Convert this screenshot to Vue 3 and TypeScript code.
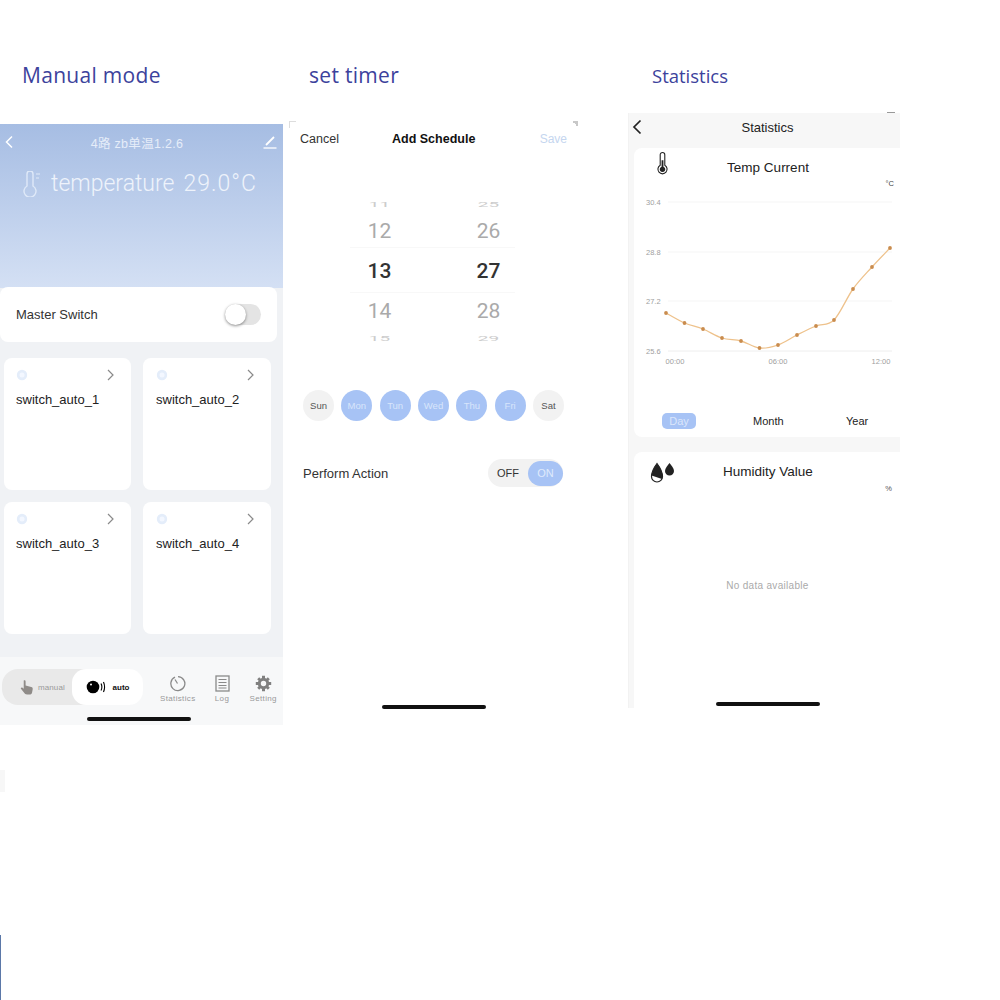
<script setup lang="ts">
// 三个并排的手机截图
const cards = ['switch_auto_1', 'switch_auto_2', 'switch_auto_3', 'switch_auto_4'];
const weekDays = [
  { label: 'Sun', on: false },
  { label: 'Mon', on: true },
  { label: 'Tun', on: true },
  { label: 'Wed', on: true },
  { label: 'Thu', on: true },
  { label: 'Fri', on: true },
  { label: 'Sat', on: false }
];
const hours = ['11', '12', '13', '14', '15'];
const minutes = ['25', '26', '27', '28', '29'];

// 折线图数据点 (viewBox 坐标)
const points: [number, number][] = [
  [32, 139], [50.5, 149], [69, 155], [88, 164], [107, 167], [125.5, 174], [144, 171],
  [163, 161], [182, 152], [200, 146], [219, 115], [238, 93], [256, 74]
];

// 平滑曲线
function smooth(pts: [number, number][]): string {
  let d = `M${pts[0][0]} ${pts[0][1]}`;
  for (let i = 0; i < pts.length - 1; i++) {
    const a = pts[Math.max(i - 1, 0)];
    const b = pts[i];
    const c = pts[i + 1];
    const e = pts[Math.min(i + 2, pts.length - 1)];
    const c1x = b[0] + (c[0] - a[0]) / 6;
    const c1y = b[1] + (c[1] - a[1]) / 6;
    const c2x = c[0] - (e[0] - b[0]) / 6;
    const c2y = c[1] - (e[1] - b[1]) / 6;
    d += ` C${c1x} ${c1y} ${c2x} ${c2y} ${c[0]} ${c[1]}`;
  }
  return d;
}
const line = smooth(points);
</script>

<template>
  <div class="page">
    <section class="col col-manual">
      <h1 class="caption">Manual mode</h1>
      <div class="phone manual">
        <div class="hero">
          <div class="hero-nav">
            <svg class="hero-icon" width="10" height="14" viewBox="0 0 10 14"><path d="M8 1.5 2.500 7 8 12.500" fill="none" stroke="#fff" stroke-width="1.500" /></svg>
            <span class="hero-title">4路 zb单温1.2.6</span>
            <svg class="hero-icon" width="14" height="14" viewBox="0 0 14 14"><path d="M3 10 11 2" fill="none" stroke="#fff" stroke-width="1.800" /><path d="M0.500 13H13.500" fill="none" stroke="#fff" stroke-width="1.300" /></svg>
          </div>
          <div class="hero-temp">
            <svg width="20" height="26" viewBox="0 0 20 26"><path d="M5 3a3 3 0 0 1 6 0v12a6 6 0 1 1-6 0Z" fill="none" stroke="#dfe9f8" stroke-width="1.400" /><path d="M14 3h4M14 7h3" stroke="#dfe9f8" stroke-width="1.200" /></svg>
            <span>temperature</span>
            <span class="hero-value">29.0°C</span>
          </div>
        </div>
        <div class="master">
          <span>Master Switch</span>
          <span class="toggle"><span class="knob"></span></span>
        </div>
        <div class="cards">
          <div v-for="name in cards" :key="name" class="card">
            <div class="card-top">
              <svg width="12" height="12" viewBox="0 0 12 12"><circle cx="6" cy="6" r="5.200" fill="#e4edfa" /><circle cx="6" cy="6" r="2.500" fill="#f3f7ff" /></svg>
              <svg width="9" height="12" viewBox="0 0 9 12"><path d="M2 1 7 6 2 11" fill="none" stroke="#8a8a8a" stroke-width="1.200" /></svg>
            </div>
            <div class="card-name">{{ name }}</div>
          </div>
        </div>
        <div class="tabbar">
          <div class="segment">
            <div class="seg-item seg-manual">
              <svg width="14" height="16" viewBox="0 0 15 17"><path d="M4 1.500c1-.8 2 0 2 1V7l6 1.500c1.400.4 1.800 1.200 1.600 2.400L13 14c-.2 1.400-1.200 2.500-3 2.500H7.500C6 16.500 5 15.800 4.200 14.500L1 10.500c-.6-.9.600-2 1.700-1.200L4 10.300Z" fill="#8f8b88" /></svg>
              <span>manual</span>
            </div>
            <div class="seg-item seg-active">
              <svg width="20" height="14" viewBox="0 0 20 14"><circle cx="7" cy="7" r="6.300" fill="#000" /><circle cx="5" cy="4.500" r="1" fill="#fff" /><path d="M15 3.500c1 2 1 5 0 7M17.500 2c1.300 3 1.300 7 0 10" fill="none" stroke="#000" stroke-width="1.100" /></svg>
              <span>auto</span>
            </div>
          </div>
          <div class="tab">
            <svg width="17" height="17" viewBox="0 0 17 17"><path d="M6 2.200A7 7 0 1 0 9 1.600" fill="none" stroke="#8a8a8a" stroke-width="1.300" /><path d="M8.500 8.500 6 4.500" stroke="#8a8a8a" stroke-width="1.300" /></svg>
            <span>Statistics</span>
          </div>
          <div class="tab">
            <svg width="15" height="17" viewBox="0 0 15 17"><rect x="1" y="1" width="13" height="15" fill="none" stroke="#8a8a8a" stroke-width="1.300" /><path d="M3.500 4.500h8M3.500 7.500h8M3.500 10.500h8M3.500 13h8" stroke="#8a8a8a" stroke-width="1" /></svg>
            <span>Log</span>
          </div>
          <div class="tab">
            <svg width="17" height="17" viewBox="0 0 17 17"><circle cx="8.500" cy="8.500" r="4.200" fill="none" stroke="#808080" stroke-width="3" /><path d="M7 .8h3v3H7ZM7 13.200h3v3H7ZM.8 7h3v3h-3ZM13.200 7h3v3h-3ZM2.200 4.300l2-2 2 2-2 2ZM10.800 12.700l2-2 2 2-2 2ZM10.800 4.300l2-2 2 2-2 2ZM2.200 12.700l2-2 2 2-2 2Z" fill="#808080" /></svg>
            <span>Setting</span>
          </div>
        </div>
        <div class="home home-manual"></div>
      </div>
    </section>

    <section class="col col-timer">
      <h1 class="caption">set timer</h1>
      <div class="phone timer">
        <div class="timer-nav">
          <span class="cancel">Cancel</span>
          <span class="timer-title">Add Schedule</span>
          <span class="save">Save</span>
        </div>
        <div class="picker">
          <div class="band"></div>
          <div class="wheel">
            <span v-for="(h, i) in hours" :key="h" :class="['num', 'num-' + i]"><span>{{ h }}</span></span>
          </div>
          <div class="wheel">
            <span v-for="(m, i) in minutes" :key="m" :class="['num', 'num-' + i]"><span>{{ m }}</span></span>
          </div>
        </div>
        <div class="days">
          <span v-for="d in weekDays" :key="d.label" :class="['day', { 'day-on': d.on }]">{{ d.label }}</span>
        </div>
        <div class="action">
          <span>Perform Action</span>
          <div class="onoff">
            <span class="off">OFF</span>
            <span class="on">ON</span>
          </div>
        </div>
        <div class="home home-timer"></div>
      </div>
    </section>

    <section class="col col-stats">
      <h1 class="caption caption-stats">Statistics</h1>
      <div class="phone stats">
        <div class="stats-nav">
          <svg class="back" width="10" height="16" viewBox="0 0 10 16"><path d="M8.500 1.500 2 8l6.500 6.500" fill="none" stroke="#222" stroke-width="1.700" /></svg>
          <span>Statistics</span>
        </div>
        <div class="panel panel-temp">
          <div class="panel-head">
            <svg class="panel-icon" width="11" height="24" viewBox="0 0 12 24"><path d="M3.500 3a2.500 2.500 0 0 1 5 0v11.500a5 5 0 1 1-5 0Z" fill="#fff" stroke="#222" stroke-width="1.200" /><path d="M5 9h2v7a3 3 0 1 1-2 0Z" fill="#222" /></svg>
            <span>Temp Current</span>
          </div>
          <svg class="chart" width="266" height="222" viewBox="0 0 266 222">
            <text x="260" y="12" text-anchor="end" class="unit">°C</text>
            <g class="ticks">
              <text x="12" y="30.500">30.4</text>
              <text x="12" y="80.500">28.8</text>
              <text x="12" y="129.500">27.2</text>
              <text x="12" y="179.500">25.6</text>
              <text x="41" y="190" text-anchor="middle">00:00</text>
              <text x="144" y="190" text-anchor="middle">06:00</text>
              <text x="247" y="190" text-anchor="middle">12:00</text>
            </g>
            <path d="M34 28H258M34 78H258M34 127H258" stroke="#f5f5f5" fill="none" />
            <path d="M34 177H258" stroke="#eeeeee" fill="none" />
            <path :d="line" fill="none" stroke="#eec28c" stroke-width="1.300" />
            <circle v-for="(p, i) in points" :key="i" :cx="p[0]" :cy="p[1]" r="1.900" fill="#c98c4e" />
          </svg>
          <div class="ranges">
            <span class="range range-on">Day</span>
            <span class="range">Month</span>
            <span class="range">Year</span>
          </div>
        </div>
        <div class="panel panel-hum">
          <div class="panel-head">
            <svg class="panel-icon" width="25" height="22" viewBox="0 0 25 22"><path d="M7 1.500c3 4 5.500 8 5.500 13a5.500 5.500 0 0 1-11 0C1.500 9.500 4 5.500 7 1.500Z" fill="#fff" stroke="#222" stroke-width="1.200" /><path d="M7 1.500c3 4 5.500 8 5.500 13 0 1-.2 1.800-.5 2.500L1.600 13.500C2 9.500 4 5.500 7 1.500Z" fill="#222" /><path d="M19.500 1c2 3 4.500 5 4.500 8a4.500 4.500 0 0 1-9 0c0-3 2.500-5 4.500-8Z" fill="#222" /></svg>
            <span>Humidity Value</span>
          </div>
          <div class="hum-unit">%</div>
          <div class="empty">No data available</div>
        </div>
        <div class="home home-stats"></div>
      </div>
    </section>

    <!-- 边缘残留 -->
    <i class="speck speck-stats"></i>
    <i class="speck speck-blob"></i>
    <i class="speck speck-edge"></i>
  </div>
</template>

<style>
html, body { background: #fff; }
</style>

<style scoped>
.page {
  position: relative;
  width: 1000px;
  height: 1000px;
  display: flex;
  align-items: flex-start;
  font-family: "Liberation Sans", "Noto Sans CJK SC", sans-serif;
  background: #fff;
  overflow: hidden;
}
.col { display: flex; flex-direction: column; flex: none; }
.col-manual { width: 283px; }
.col-timer { width: 293px; margin-left: 6px; }
.col-stats { width: 272px; margin-left: 46px; }
.caption {
  margin: 0;
  padding-top: 62px;
  height: 26px;
  box-sizing: content-box;
  font: 400 21px/26px "Open Sans", sans-serif;
  color: #3c429c;
  padding-left: 22px;
  letter-spacing: 0.3px;
}
.col-manual .caption { padding-bottom: 36px; }
.col-timer .caption { padding-left: 20px; padding-bottom: 33px; }
.caption-stats { font-size: 18.500px; padding-left: 24px; padding-top: 63px; padding-bottom: 24px; letter-spacing: 0; }
.phone { position: relative; }

/* manual */
.manual { height: 601px; background: #f0f2f5; }
.hero {
  height: 164px;
  margin-bottom: -1px;
  background: linear-gradient(#a6bde3, #d4e0f4);
  color: #eef3fb;
}
.hero-nav {
  display: flex;
  align-items: center;
  justify-content: space-between;
  padding: 11px 6px 0 4px;
  height: 14px;
}
.hero-title { font-size: 12.500px; letter-spacing: 0.3px; color: #e6edf9; margin-left: -3px; }
.hero-icon { flex: none; }
.hero-temp {
  display: flex;
  align-items: center;
  gap: 9px;
  margin-top: 21px;
  padding-left: 22px;
  font-size: 23px;
  font-family: Roboto, sans-serif;
  font-weight: 300;
}
.hero-value { letter-spacing: 1px; }
.master {
  display: flex;
  align-items: center;
  justify-content: space-between;
  height: 55px;
  margin-right: 6px;
  padding: 0 16px;
  background: #fff;
  border-radius: 8px;
  font-size: 13px;
  color: #333;
}
.toggle { width: 36px; height: 21px; border-radius: 11px; background: #e4e4e4; display: block; }
.knob {
  display: block;
  width: 21px;
  height: 21px;
  border-radius: 50%;
  background: #fff;
  box-shadow: 0 1px 3px rgba(0, 0, 0, 0.45);
}
.cards {
  display: grid;
  grid-template-columns: 127px 128px;
  grid-auto-rows: 132px;
  column-gap: 12px;
  row-gap: 12px;
  padding: 16px 0 0 4px;
}
.card { background: #fff; border-radius: 8px; padding: 11px 12px 0 12px; }
.card:nth-child(even) { padding-left: 13px; }
.card-top { display: flex; justify-content: space-between; align-items: center; padding: 0 4px 0 0; }
.card-name { margin-top: 11px; font-size: 13px; color: #222; }
.tabbar {
  position: absolute;
  left: 0;
  right: 0;
  bottom: 0;
  height: 68px;
  display: flex;
  align-items: flex-start;
  padding: 12px 0 0 2px;
  box-sizing: border-box;
  background: #f7f8f9;
}
.segment { display: flex; width: 141px; height: 36px; border-radius: 16px; background: #e9e9e9; }
.seg-item { flex: 1; display: flex; align-items: center; justify-content: center; gap: 4px; font-size: 8px; color: #999; }
.seg-manual { width: 70px; flex: none; justify-content: flex-start; padding-left: 18px; box-sizing: border-box; letter-spacing: 0.1px; }
.seg-active { background: #fff; border-radius: 14px; color: #111; font-weight: 700; gap: 7px; }
.tab {
  display: flex;
  flex-direction: column;
  align-items: center;
  gap: 2px;
  margin-top: 6px;
  font-size: 8px;
  color: #999;
  letter-spacing: 0.35px;
}
.tab:nth-child(2) { margin-left: 17px; }
.tab:nth-child(3) { margin-left: 19px; }
.tab:nth-child(4) { margin-left: 20px; }
.home { position: absolute; height: 4px; border-radius: 2px; background: #111; }
.home-manual { left: 87px; width: 104px; bottom: 4px; }

/* timer */
.timer { height: 588px; background: #fff; }
.timer::before, .timer::after { content: ""; position: absolute; top: 0; width: 6px; height: 6px; }
.timer::before { left: 0; border-top: 1px solid #ddd; border-left: 1px solid #ddd; }
.timer::after { right: 4px; background: linear-gradient(45deg, transparent 50%, #c8c8c8 50%); }
.timer-nav { position: relative; display: flex; justify-content: space-between; align-items: center; height: 15px; padding: 10px 15px 1px 11px; font-size: 12.500px; }
.cancel { color: #333; }
.timer-title { position: absolute; left: 103px; font-weight: 700; color: #111; }
.save { color: #c5d6ef; font-size: 12px; }
.picker { position: relative; display: flex; padding: 50px 0 0 36px; }
.band {
  position: absolute;
  left: 61px;
  top: 100px;
  width: 165px;
  height: 44px;
  border-top: 1px solid #f8f8f8;
  border-bottom: 1px solid #f8f8f8;
}
.wheel { display: flex; flex-direction: column; align-items: center; width: 109px; color: #aaa; }
.num {
  display: flex;
  align-items: center;
  justify-content: center;
  height: 40px;
  font: 400 21px/1 Roboto, sans-serif;
}
.num-0, .num-4 { height: 14px; font-size: 19px; color: #ccc; }
.num-0 span, .num-4 span { display: block; transform: scaleY(0.42); }
.num-2 { font-weight: 500; color: #333; }
.days { display: flex; gap: 7.330px; padding: 45px 0 0 14px; }
.day {
  width: 31px;
  height: 31px;
  border-radius: 50%;
  background: #f2f2f2;
  color: #555;
  font-size: 9.500px;
  display: flex;
  align-items: center;
  justify-content: center;
}
.day-on { background: #a7c3f5; color: #d8e5fb; }
.action { display: flex; align-items: center; justify-content: space-between; margin-top: 38px; padding: 0 19px 0 14px; font-size: 13px; color: #333; }
.onoff { display: flex; align-items: center; height: 28px; width: 75px; border-radius: 14px; background: #f2f2f2; font-size: 11px; }
.off { flex: 1; text-align: center; color: #333; }
.on { width: 35px; height: 25px; line-height: 25px; text-align: center; border-radius: 13px; background: #a7c3f5; color: #dfeafc; }
.home-timer { left: 93px; width: 104px; bottom: 0; }

/* statistics */
.stats { height: 595px; background: #f7f7f7; border-left: 1px solid #f2f2f2; }
.stats-nav { position: relative; height: 35px; box-sizing: border-box; padding: 0 0 7px 6px; display: flex; align-items: center; justify-content: center; font-size: 13px; color: #222; }
.back { position: absolute; left: 3px; top: 6px; }
.panel { margin-left: 5px; background: #fff; border-radius: 8px 0 0 8px; }
.panel-temp { height: 289px; margin-bottom: 15px; position: relative; }
.panel-hum { height: 256px; border-radius: 8px 0 0 0; position: relative; }
.panel-head { position: relative; height: 38px; display: flex; align-items: center; justify-content: center; font-size: 13.500px; color: #222; padding-left: 2px; }
.panel-icon { position: absolute; left: 23px; top: 3px; }
.panel-hum .panel-icon { left: 16px; top: 10px; }
.chart { position: absolute; left: 0; top: 26px; }
.chart text { font-family: "Liberation Sans", sans-serif; font-size: 7.500px; fill: #a0a0a0; }
.chart .unit { fill: #444; }
.ranges { position: absolute; left: 0; right: 0; top: 265px; font-size: 11px; color: #222; }
.range { position: absolute; top: 0; height: 16px; line-height: 16px; text-align: center; }
.range:nth-child(1) { left: 28px; width: 34px; }
.range:nth-child(2) { left: 119px; }
.range:nth-child(3) { left: 212px; }
.range-on { background: #a7c3f5; color: #dbe6fb; border-radius: 5px; }
.hum-unit { position: absolute; right: 8px; top: 32px; font-size: 7.500px; color: #555; }
.empty { position: absolute; left: 0; right: 0; top: 128px; text-align: center; font-size: 10px; letter-spacing: 0.3px; color: #aaa; padding-left: 1px; }
.home-stats { left: 87px; width: 104px; bottom: 2px; }

.speck { position: absolute; display: block; }
.speck-stats { left: 887px; top: 112px; width: 8px; height: 1px; background: #999; }
.speck-blob { left: 0; top: 770px; width: 5px; height: 22px; background: #f7f7f7; }
.speck-edge { left: 0; top: 935px; width: 1px; height: 65px; background: #5b78a8; }
</style>
